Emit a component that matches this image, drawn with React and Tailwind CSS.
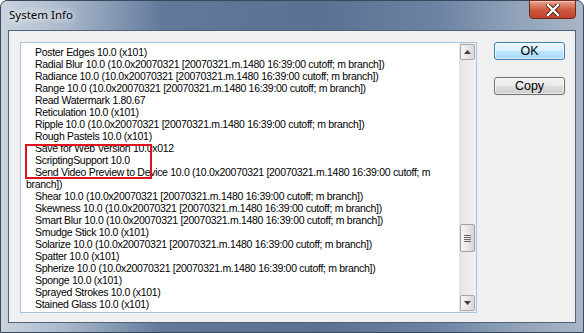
const LONG = '(10.0x20070321 [20070321.m.1480 16:39:00 cutoff; m branch])';

const lines = [
  { t: 'Poster Edges 10.0 (x101)' },
  { t: `Radial Blur 10.0 ${LONG}` },
  { t: `Radiance 10.0 ${LONG}` },
  { t: `Range 10.0 ${LONG}` },
  { t: 'Read Watermark 1.80.67' },
  { t: 'Reticulation 10.0 (x101)' },
  { t: `Ripple 10.0 ${LONG}` },
  { t: 'Rough Pastels 10.0 (x101)' },
  { t: 'Save for Web Version 10.0x012' },
  { t: 'ScriptingSupport 10.0' },
  { t: 'Send Video Preview to Device 10.0 (10.0x20070321 [20070321.m.1480 16:39:00 cutoff; m' },
  { t: 'branch])', wrap: true },
  { t: `Shear 10.0 ${LONG}` },
  { t: `Skewness 10.0 ${LONG}` },
  { t: `Smart Blur 10.0 ${LONG}` },
  { t: 'Smudge Stick 10.0 (x101)' },
  { t: `Solarize 10.0 ${LONG}` },
  { t: 'Spatter 10.0 (x101)' },
  { t: `Spherize 10.0 ${LONG}` },
  { t: 'Sponge 10.0 (x101)' },
  { t: 'Sprayed Strokes 10.0 (x101)' },
  { t: 'Stained Glass 10.0 (x101)' },
];

function ScrollButton({ down }) {
  return (
    <div className="w-[15px] h-[16px] rounded-[2px] border border-[#a7a7a7] bg-gradient-to-r from-[#f6f6f6] to-[#d9d9d9] flex items-center justify-center">
      <svg width="7" height="4" viewBox="0 0 7 4">
        {down ? (
          <path d="M0 0 H7 L3.5 4 Z" fill="#3d3d3d" />
        ) : (
          <path d="M0 4 H7 L3.5 0 Z" fill="#3d3d3d" />
        )}
      </svg>
    </div>
  );
}

function Scrollbar() {
  return (
    <div className="w-[17px] h-full flex flex-col items-center py-[1px] bg-gradient-to-r from-[#e4e4e4] to-[#f2f2f2]">
      <ScrollButton />
      <div className="mt-[164px] w-[15px] h-[28px] rounded-[2px] border border-[#a0a0a0] bg-gradient-to-r from-[#f6f6f6] to-[#d6d6d6] flex flex-col items-center justify-center gap-[1px]">
        <div className="w-[7px] h-[1px] bg-[#6a6a6a]" />
        <div className="w-[7px] h-[1px] bg-[#6a6a6a]" />
        <div className="w-[7px] h-[1px] bg-[#6a6a6a]" />
        <div className="w-[7px] h-[1px] bg-[#6a6a6a]" />
      </div>
      <div className="flex-1" />
      <ScrollButton down />
    </div>
  );
}

function CloseButton() {
  return (
    <div className="w-[47px] h-[19px] mt-[-1px] rounded-b-[4px] border border-[#6b2a1e] bg-gradient-to-b from-[#e8a493] via-[#cf5a40] to-[#c2402a] flex items-center justify-center shadow-[inset_0_1px_0_rgba(255,255,255,0.4)]">
      <svg width="14" height="12" viewBox="0 0 14 12">
        <path d="M2 1 L12 11 M12 1 L2 11" stroke="#4a1d15" strokeWidth="4.2" strokeLinecap="square" />
        <path d="M2 1 L12 11 M12 1 L2 11" stroke="#ffffff" strokeWidth="2.4" strokeLinecap="square" />
      </svg>
    </div>
  );
}

export default function App() {
  return (
    <div className="w-[584px] h-[333px] bg-white">
      <div className="w-full h-full rounded-t-[7px] border border-[#39485c] bg-[linear-gradient(90deg,#c9d3de_0%,#adbccd_10%,#61789a_28%,#5a7193_55%,#6d83a3_75%,#8fa1b8_88%,#a9b6c6_100%)] flex flex-col px-[7px] pb-[9px]">
        <div className="h-[29px] flex items-start justify-between">
          <div className="pt-[6px] pl-[1px] text-[11.5px] leading-[16px] text-black [font-family:'Noto_Sans',sans-serif] [text-shadow:0_0_6px_#fff,0_0_8px_#fff]">
            System Info
          </div>
          <CloseButton />
        </div>
        <div className="flex-1 border border-[#4f6079] bg-[#f0f0f0] flex pt-[11px] pl-[11px]">
          <div className="relative w-[457px] h-[271px] border border-[#a5c2df] bg-white flex">
            <div className="flex-1 pl-[5px] pt-[3px] text-[10.5px] tracking-[-0.3px] leading-[12px] text-black whitespace-nowrap overflow-hidden [font-family:'Liberation_Sans',sans-serif]">
              {lines.map((l, i) => (
                <div key={i} className={l.wrap ? '' : 'pl-[9px]'}>
                  {l.t}
                </div>
              ))}
            </div>
            <Scrollbar />
            <div className="absolute left-[4px] top-[101px] w-[127px] h-[35px] border-2 border-[#e3111b]" />
          </div>
          <div className="ml-[17px] flex flex-col gap-[17px] [font-family:'Liberation_Sans',sans-serif] text-[12.5px] text-black">
            <div className="w-[71px] h-[18px] rounded-[3px] border border-[#3c7fb1] bg-[linear-gradient(180deg,#eaf6fd_0%,#d9f0fc_50%,#bee6fd_50%,#a7d9f5_100%)] flex items-center justify-center leading-none shadow-[inset_0_0_0_1px_rgba(255,255,255,0.6)]">
              OK
            </div>
            <div className="w-[71px] h-[18px] rounded-[3px] border border-[#707070] bg-[linear-gradient(180deg,#f2f2f2_0%,#ebebeb_50%,#dddddd_50%,#cfcfcf_100%)] flex items-center justify-center leading-none shadow-[inset_0_0_0_1px_rgba(255,255,255,0.6)]">
              Copy
            </div>
          </div>
        </div>
      </div>
    </div>
  );
}
